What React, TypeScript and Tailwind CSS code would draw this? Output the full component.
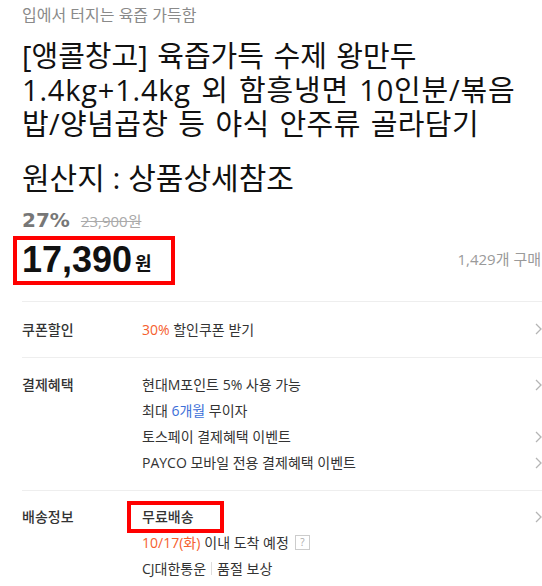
import React from 'react';

const Chevron: React.FC = () => (
  <svg width="7" height="12" viewBox="0 0 7 12" className="shrink-0">
    <path d="M1 1l5 5-5 5" fill="none" stroke="#b5b5b5" strokeWidth="1.3" />
  </svg>
);

const App: React.FC = () => {
  return (
    <div
      className="w-[542px] h-[586px] overflow-hidden bg-white pl-[22px] text-[#333]"
      style={{ fontFamily: '"Open Sans", "Noto Sans CJK KR", sans-serif' }}
    >
      {/* subtitle */}
      <p className="pt-[5px] text-[16px] leading-[20px] text-[#8a8a8a]">입에서 터지는 육즙 가득함</p>

      {/* title */}
      <h1 className="mt-[14px] text-[29px] leading-[34px] text-[#111] whitespace-nowrap [word-spacing:2px]">
        <div>[앵콜창고] 육즙가득 수제 왕만두</div>
        <div className="tracking-[0.8px]">1.4kg+1.4kg 외 함흥냉면 10인분/볶음</div>
        <div className="tracking-[0.4px]">밥/양념곱창 등 야식 안주류 골라담기</div>
      </h1>
      <p className="mt-[20px] text-[30px] leading-[34px] text-[#111]">원산지 : 상품상세참조</p>

      {/* price */}
      <div className="mt-[14px] flex items-baseline gap-[11px]">
        <span className="text-[20px] font-bold text-[#777] leading-[22px]" style={{ fontFamily: '"DejaVu Sans", sans-serif' }}>
          27%
        </span>
        <span className="text-[15px] text-[#aaa] line-through">23,900원</span>
      </div>
      <div className="flex items-end justify-between pr-[1px]">
        <div className="-ml-[9px] mt-[3px] w-[162px] h-[49px] border-4 border-[#ff0000] flex items-center pl-[5px] gap-[3px]">
          <span className="text-[36px] font-bold text-[#111] leading-none" style={{ fontFamily: '"Liberation Sans", sans-serif' }}>
            17,390
          </span>
          <span className="text-[18px] font-bold text-[#111] leading-none mt-[6px]">원</span>
        </div>
        <span className="mb-[14px] text-[15px] text-[#9a9a9a]">1,429개 구매</span>
      </div>

      {/* coupon */}
      <div className="mt-[16px] border-t border-[#eeeeee] h-[56px] flex items-center text-[14px]">
        <span className="w-[120px] font-medium">쿠폰할인</span>
        <span className="flex-1">
          <span className="text-[#f5602e]">30%</span> 할인쿠폰 받기
        </span>
        <Chevron />
      </div>

      {/* payment */}
      <div className="border-t border-[#eeeeee] pt-[14px] pb-[14px] flex text-[14px] leading-[26px]">
        <span className="w-[120px] font-medium">결제혜택</span>
        <div className="flex-1 flex flex-col">
          <div className="flex items-center justify-between">
            <span>현대M포인트 5% 사용 가능</span>
            <Chevron />
          </div>
          <div>
            최대 <span className="text-[#3d6fd8]">6개월</span> 무이자
          </div>
          <div className="flex items-center justify-between">
            <span>토스페이 결제혜택 이벤트</span>
            <Chevron />
          </div>
          <div className="flex items-center justify-between">
            <span>PAYCO 모바일 전용 결제혜택 이벤트</span>
            <Chevron />
          </div>
        </div>
      </div>

      {/* delivery */}
      <div className="border-t border-[#eeeeee] pt-[13px] flex text-[14px] leading-[26px]">
        <span className="w-[120px] font-medium">배송정보</span>
        <div className="flex-1 flex flex-col">
          <div className="flex items-center justify-between">
            <span className="-ml-[15px] -my-[3px] w-[97px] h-[32px] border-4 border-[#ff0000] pl-[11px] leading-[24px] font-medium">
              무료배송
            </span>
            <Chevron />
          </div>
          <div className="flex items-center">
            <span className="text-[#f5602e]">10/17(화)</span>
            <span className="ml-[4px]">이내 도착 예정</span>
            <span className="ml-[6px] w-[15px] h-[15px] border border-[#ccc] text-[10px] leading-[13px] text-[#aaa] text-center">?</span>
          </div>
          <div className="flex items-center">
            <span>CJ대한통운</span>
            <span className="mx-[5px] w-px h-[13px] bg-[#ddd]" />
            <span>품절 보상</span>
          </div>
        </div>
      </div>
    </div>
  );
};

export default App;
